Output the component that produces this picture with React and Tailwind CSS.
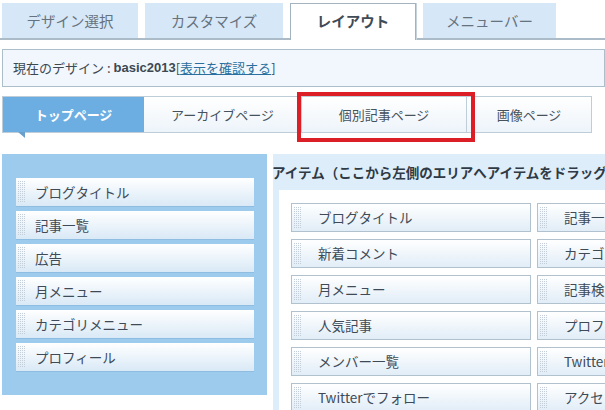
import React from "react";

const font = { fontFamily: '"Noto Sans CJK JP", "Noto Sans", sans-serif' };

function Grip() {
  return (
    <svg width="8" height="22" className="shrink-0" aria-hidden="true">
      <defs>
        <pattern id="dots" width="2" height="2" patternUnits="userSpaceOnUse">
          <rect x="0" y="0" width="1" height="1" fill="#c3ced8" />
        </pattern>
      </defs>
      <rect x="0" y="0" width="8" height="22" fill="url(#dots)" />
    </svg>
  );
}

function LeftItem({ label }) {
  return (
    <div className="flex h-[28px] items-center bg-linear-to-b from-white to-[#d9e9f6] pl-[2px] shadow-[0_1px_0_#8fbde2]">
      <Grip />
      <span className="ml-[9px] text-[13.5px] text-[#3e4b57] whitespace-nowrap">{label}</span>
    </div>
  );
}

function RightItem({ label }) {
  return (
    <div className="flex h-[29px] w-[240px] items-center border border-[#b1c1cd] bg-linear-to-b from-white to-[#e1edf7] pl-[2px]">
      <Grip />
      <span className="ml-[16px] text-[13.5px] text-[#3e4b57] whitespace-nowrap">{label}</span>
    </div>
  );
}

export default function App() {
  const tabs = [
    { label: "デザイン選択", w: "w-[136px]" },
    { label: "カスタマイズ", w: "w-[138px]" },
  ];
  const leftItems = ["ブログタイトル", "記事一覧", "広告", "月メニュー", "カテゴリメニュー", "プロフィール"];
  const rightItems = [
    "ブログタイトル", "記事一覧",
    "新着コメント", "カテゴリメニュー",
    "月メニュー", "記事検索",
    "人気記事", "プロフィール",
    "メンバー一覧", "Twitterフォロー",
    "Twitterでフォロー", "アクセスカウンター",
  ];

  return (
    <div className="relative h-[410px] w-[605px] overflow-hidden bg-white" style={font}>
      {/* Top tabs */}
      <div className="flex h-[40px] items-end gap-[7px] border-b-2 border-[#abbcc8] pl-[2px]">
        {tabs.map((t) => (
          <div
            key={t.label}
            className={`flex h-[35px] ${t.w} items-center justify-center bg-[#d6e7f7] text-[14.5px] text-[#66727d]`}
          >
            {t.label}
          </div>
        ))}
        <div className="-mb-[2px] flex h-[37px] w-[126px] items-center justify-center border-x border-t border-[#a3b3bf] bg-white pb-[2px] text-[14.5px] font-bold text-[#3f4b55] shadow-[1px_0_0_#c7d3dc]">
          レイアウト
        </div>
        <div className="flex h-[35px] w-[133px] items-center justify-center bg-[#d6e7f7] text-[14.5px] text-[#66727d]">
          メニューバー
        </div>
      </div>

      {/* Current design */}
      <div className="ml-[2px] mt-[9px] flex h-[38px] items-center border border-[#adbecb] bg-[#f1f7fc] pl-[10px] text-[13px] text-[#3c4852] whitespace-nowrap">
        <span>現在のデザイン : </span>
        <span className="ml-[3px] font-bold" style={{ fontFamily: '"Liberation Sans", "Noto Sans", sans-serif' }}>basic2013</span>
        <span>[</span>
        <span className="text-[#2b6f9e] underline">表示を確認する</span>
        <span>]</span>
      </div>

      {/* Sub tabs */}
      <div className="relative ml-[2px] mt-[9px] flex h-[37px] w-[590px] border border-[#bfcdd8] text-[13px]">
        <div className="relative flex w-[141px] items-center justify-center bg-[#6daee2] font-bold text-white">
          トップページ
          <div className="absolute left-[15px] top-full h-0 w-0 border-l-[7px] border-r-0 border-t-[6px] border-l-transparent border-t-[#6a9fc9]" />
        </div>
        <div className="flex w-[157px] items-center justify-center bg-linear-to-b from-white to-[#edf4fa] text-[#46525c]">
          アーカイブページ
        </div>
        <div className="flex w-[166px] items-center justify-center border-x border-[#bfcdd8] bg-linear-to-b from-white to-[#edf4fa] text-[#46525c]">
          個別記事ページ
        </div>
        <div className="flex flex-1 items-center justify-center bg-linear-to-b from-white to-[#edf4fa] text-[#46525c]">
          画像ページ
        </div>
      </div>

      {/* Red highlight */}
      <div className="absolute left-[297px] top-[92px] h-[50px] w-[178px] border-[4px] border-[#dc1f26]" />

      {/* Panels */}
      <div className="mt-[21px] flex items-start">
        <div className="ml-[2px] flex h-[241px] w-[265px] shrink-0 flex-col gap-[5px] bg-[#9dcbee] pl-[14px] pr-[13px] pt-[24px]">
          {leftItems.map((l) => (
            <LeftItem key={l} label={l} />
          ))}
        </div>

        <div className="ml-[6px] flex min-w-0 flex-1 flex-col">
          <div className="flex h-[36px] items-center bg-[#deedfa] text-[13.5px] font-bold text-[#2f3a44] whitespace-nowrap">
            <span className="-ml-[1px]">アイテム（ここから左側のエリアへアイテムをドラッグ＆ドロップしてください）</span>
          </div>
          <div className="border-l-[6px] border-[#deedfa] bg-white pl-[12px] pt-[13px]">
            <div className="grid w-max grid-cols-[240px_240px] gap-x-[6px] gap-y-[7px]">
              {rightItems.map((r, i) => (
                <RightItem key={i} label={r} />
              ))}
            </div>
          </div>
        </div>
      </div>
    </div>
  );
}
